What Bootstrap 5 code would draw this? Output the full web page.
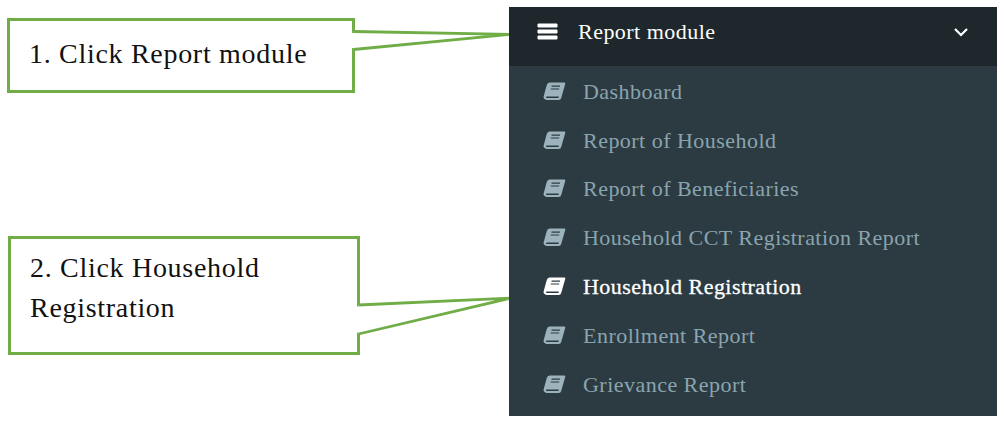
<!DOCTYPE html>
<html lang="en">
<head>
    <meta charset="UTF-8">
    <meta name="viewport" content="width=device-width, initial-scale=1.0">
    <title>Report module steps</title>
    <link href="https://cdn.jsdelivr.net/npm/bootstrap@5.3.0/dist/css/bootstrap.min.css" rel="stylesheet">
    <style>
        body {
            background-color: #fff;
            overflow: hidden;
        }
        .guide-page {
            width: 1006px;
            height: 423px;
        }
        .steps-col {
            width: 509px;
        }
        .step-box {
            border: 3px solid #70ad47;
            background-color: #fff;
            color: #111;
            font-family: "Liberation Serif", serif;
            font-size: 28px;
            letter-spacing: .7px;
            line-height: 40px;
        }
        .step-one {
            width: 348px;
            height: 75px;
            margin: 18px 0 0 7px;
            padding: 13px 0 0 19px;
        }
        .step-two {
            width: 352px;
            height: 119px;
            margin: 143px 0 0 8px;
            padding: 9px 0 0 19px;
        }
        .callout-tails {
            top: 0;
            left: 0;
        }
        .side-panel {
            width: 488px;
            height: 409px;
            margin-top: 7px;
            background-color: #2c3b41;
            font-family: "Liberation Serif", serif;
            font-size: 22px;
            letter-spacing: .47px;
        }
        .panel-head {
            height: 59px;
            background-color: #1e282c;
            color: #fff;
            padding: 0 28px 10px 28px;
        }
        .panel-head .bars {
            width: 21px;
            margin-right: 20px;
        }
        .panel-menu {
            padding-top: 1px;
        }
        .panel-menu .nav-link {
            height: 48.8px;
            padding: 0 0 0 34px;
            color: #8aa4af;
        }
        .panel-menu .nav-link .book-icon {
            color: #9cb3bd;
        }
        .panel-menu .nav-link.active,
        .panel-menu .nav-link.active .book-icon {
            color: #fff;
        }
        .panel-menu .nav-link.active {
            -webkit-text-stroke: .3px #fff;
        }
        .book-icon {
            width: 23px;
            height: 19px;
            margin-right: 17px;
            flex-shrink: 0;
        }
    </style>
</head>
<body>
    <div class="guide-page position-relative d-flex">
        <div class="steps-col">
            <div class="step-box step-one">1. Click Report module</div>
            <div class="step-box step-two">2. Click Household<br>Registration</div>
        </div>

        <!-- tails of the two callouts, they sit over the box borders -->
        <svg class="callout-tails position-absolute" width="512" height="423" viewBox="0 0 512 423">
            <rect x="351.5" y="33" width="4" height="15" fill="#fff"/>
            <rect x="356.5" y="306.5" width="4" height="26" fill="#fff"/>
            <polyline points="353.5,31.5 511,34.3 353.5,49.5" fill="#fff" stroke="#70ad47" stroke-width="2.8"/>
            <polyline points="358.5,305 511,298 358.5,334" fill="#fff" stroke="#70ad47" stroke-width="2.8"/>
        </svg>

        <div class="side-panel position-relative">
            <div class="panel-head d-flex align-items-center">
                <svg class="bars" height="17" viewBox="0 0 21 17">
                    <path d="M1 1h19v3H1zM1 7h19v3H1zM1 13h19v3H1z" fill="#fff" stroke="#fff" stroke-width="1" stroke-linejoin="round"/>
                </svg>
                <span>Report module</span>
                <svg class="ms-auto" width="16" height="10" viewBox="0 0 16 10">
                    <path d="M2 2l6 6 6-6" fill="none" stroke="#fff" stroke-width="2.2"/>
                </svg>
            </div>
            <nav class="nav flex-column panel-menu">
                <a class="nav-link d-flex align-items-center" href="#">
                    <svg class="book-icon" viewBox="0 0 23 19"><use href="#book"/></svg>Dashboard
                </a>
                <a class="nav-link d-flex align-items-center" href="#">
                    <svg class="book-icon" viewBox="0 0 23 19"><use href="#book"/></svg>Report of Household
                </a>
                <a class="nav-link d-flex align-items-center" href="#">
                    <svg class="book-icon" viewBox="0 0 23 19"><use href="#book"/></svg>Report of Beneficiaries
                </a>
                <a class="nav-link d-flex align-items-center" href="#">
                    <svg class="book-icon" viewBox="0 0 23 19"><use href="#book"/></svg>Household CCT Registration Report
                </a>
                <a class="nav-link active d-flex align-items-center" href="#">
                    <svg class="book-icon" viewBox="0 0 23 19"><use href="#book"/></svg>Household Registration
                </a>
                <a class="nav-link d-flex align-items-center" href="#">
                    <svg class="book-icon" viewBox="0 0 23 19"><use href="#book"/></svg>Enrollment Report
                </a>
                <a class="nav-link d-flex align-items-center" href="#">
                    <svg class="book-icon" viewBox="0 0 23 19"><use href="#book"/></svg>Grievance Report
                </a>
            </nav>
        </div>
    </div>

    <svg width="0" height="0" class="position-absolute">
        <defs>
            <g id="book">
                <path fill-rule="evenodd" fill="currentColor" d="M6.6 .6H21.2a1 1 0 0 1 1 1.3L18.2 16a2.6 2.6 0 0 1-2.5 1.9H3.6A3 3 0 0 1 .6 14.4L3.7 3.2A3.8 3.8 0 0 1 6.6 .6ZM8.7 3.6l-.3 1.1h8.4l.3-1.1ZM7.9 6.4l-.3 1.1h8.4l.3-1.1ZM3.7 14.4c-.9 0-1 1.7 0 1.7h11.7l.5-1.7Z"/>
            </g>
        </defs>
    </svg>

    <script src="https://cdn.jsdelivr.net/npm/bootstrap@5.3.0/dist/js/bootstrap.bundle.min.js"></script>
</body>
</html>
